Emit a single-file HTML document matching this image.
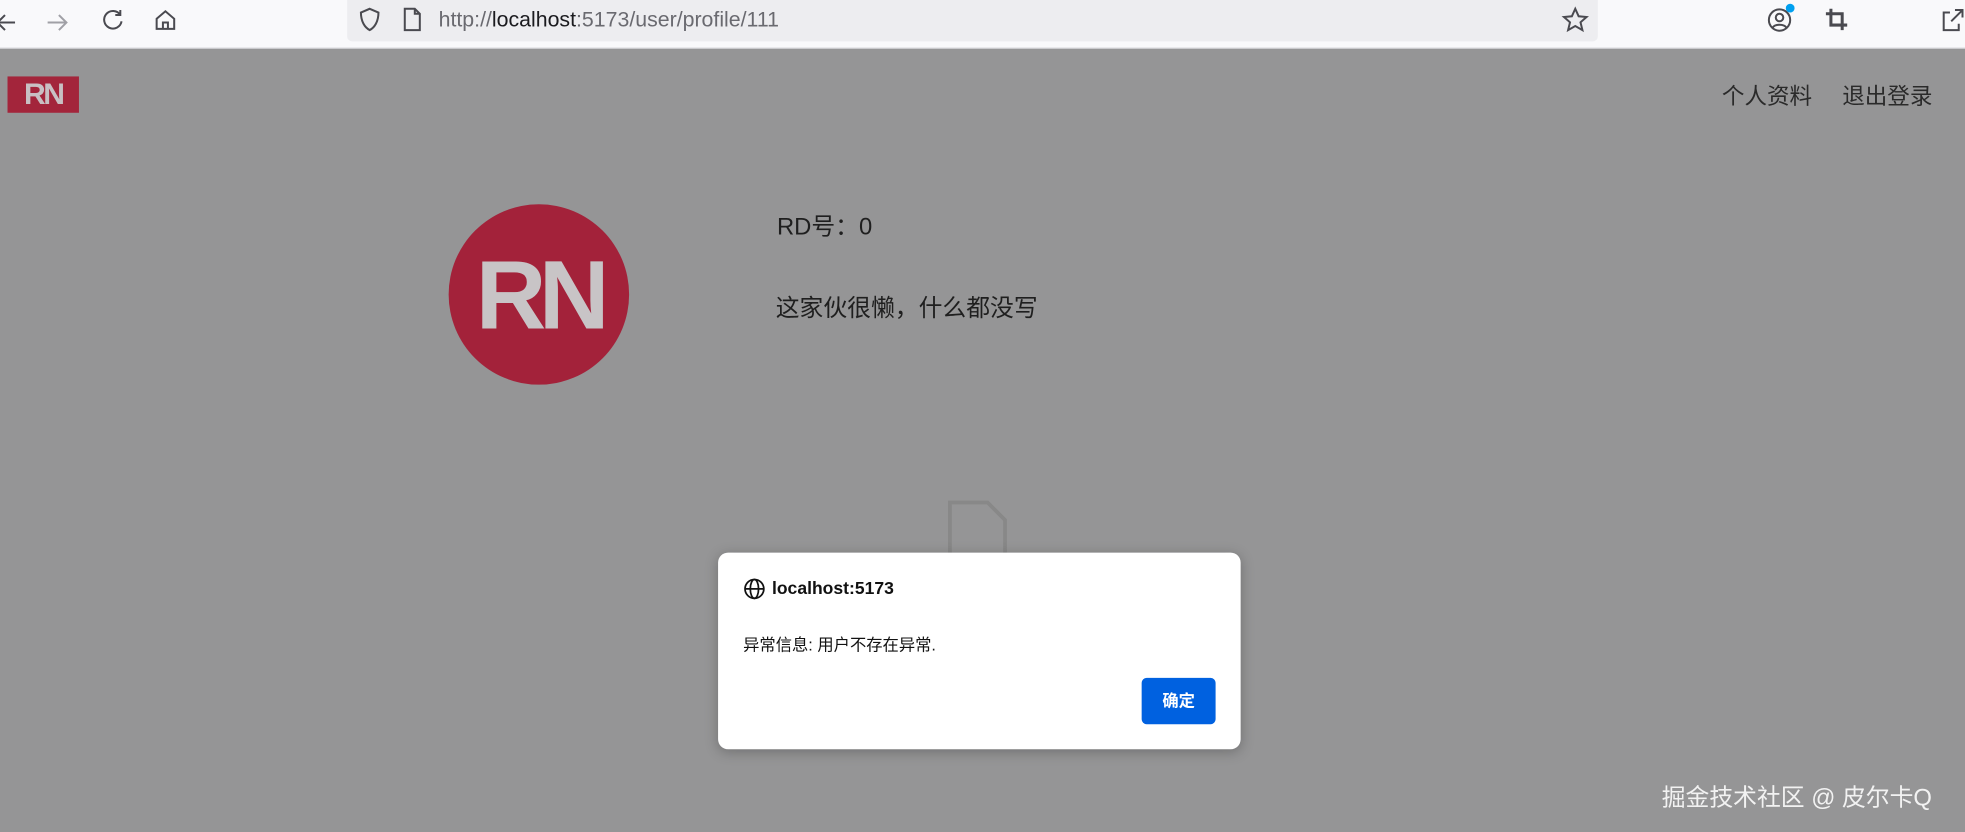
<!DOCTYPE html>
<html><head><meta charset="utf-8"><style>
html,body{margin:0;padding:0;width:1965px;height:832px;overflow:hidden;background:#959596}
#w{position:absolute;left:0;top:0;width:1568px;height:664px;transform:scale(1.25319,1.25301);transform-origin:0 0;font-family:"Liberation Sans","Noto Sans CJK SC",sans-serif}
.top{position:absolute;left:0;top:0;width:1568px;height:38px;background:#f9f9fb;border-bottom:1px solid #d0d0d4}
.url{position:absolute;left:277px;top:0;width:998px;height:33px;background:#ededf0;border-radius:0 0 4px 4px}
.urltxt{position:absolute;left:350px;top:6px;font-size:17px;color:#6a6a70}
.urltxt b{font-weight:normal;color:#1b1b1f}
.ic{position:absolute;stroke:#4a4a50;fill:none;stroke-width:1.6}
.page{position:absolute;left:0;top:39px;width:1568px;height:625px;background:#959596}
.logo{position:absolute;left:6px;top:22px;width:57px;height:29px;background:#a3253b;color:#c8c0c3;font-weight:bold;font-size:24px;line-height:29px;text-align:center;letter-spacing:-2px}
.nav{position:absolute;top:24px;font-size:18px;color:#2a2a2a}
.av{position:absolute;left:358px;top:124px;width:144px;height:144px;border-radius:50%;background:#a3223a;color:#c8c4c6;font-weight:bold;font-size:78px;line-height:144px;text-align:center;letter-spacing:-6px}
.t{position:absolute;font-size:19px;color:#1f1f1f}
.dlg{position:absolute;left:573px;top:441px;width:417px;height:157px;background:#fff;border-radius:8px;box-shadow:0 2px 10px rgba(0,0,0,.25)}
.btn{position:absolute;left:338px;top:100px;width:59px;height:37px;background:#0061e0;border-radius:4px;color:#fff;font-weight:bold;font-size:13px;line-height:37px;text-align:center}
</style></head><body><div id="w">
<div class="top">
<svg class="ic" style="left:-4px;top:8px" width="20" height="20"><path d="M16 10H2M8 4L2 10l6 6"/></svg>
<svg class="ic" style="left:36px;top:8px;stroke:#a0a0a6" width="20" height="20"><path d="M2 10h15M11 4l6 6-6 6"/></svg>
<svg class="ic" style="left:80px;top:6px" width="20" height="20"><path d="M16 6A7 7 0 1 0 17 11M16 2v4h-4"/></svg>
<svg class="ic" style="left:122px;top:6px" width="20" height="20"><path d="M3 9l7-6 7 6v8H3zM8 17v-5h4v5"/></svg>
<div class="url"></div>
<svg class="ic" style="left:285px;top:5px" width="20" height="22"><path d="M10 2l7 3c0 7-3 12-7 14C6 17 3 12 3 5z"/></svg>
<svg class="ic" style="left:320px;top:5px" width="18" height="22"><path d="M3 2h8l4 4v13H3zM11 2v4h4"/></svg>
<div class="urltxt">http://<b>localhost</b>:5173/user/profile/111</div>
<svg class="ic" style="left:1246px;top:5px" width="22" height="22"><path d="M11 2l2.7 6 6.3.6-4.8 4.2 1.5 6.2L11 15.8 5.3 19l1.5-6.2L2 8.6 8.3 8z"/></svg>
<svg class="ic" style="left:1409px;top:5px" width="22" height="22"><circle cx="11" cy="11" r="8.5"/><circle cx="11" cy="9" r="3"/><path d="M5.5 17c2-3 9-3 11 0"/></svg>
<div style="position:absolute;left:1425px;top:3px;width:7px;height:7px;border-radius:50%;background:#00a0f0"></div>
<svg class="ic" style="left:1455px;top:5px;stroke-width:2.4" width="22" height="22"><path d="M6 2v13h13M2 6h13v13"/></svg>
<svg class="ic" style="left:1548px;top:5px" width="22" height="22"><path d="M8 5H3v14h12v-5M9 12L18 3M12 3h6v6"/></svg>
</div>
<div class="page">
<div class="logo">RN</div>
<div class="nav" style="left:1374px">个人资料</div>
<div class="nav" style="left:1470px">退出登录</div>
<div class="av">RN</div>
<div class="t" style="left:620px;top:127px">RD号：0</div>
<div class="t" style="left:619px;top:192px">这家伙很懒，什么都没写</div>
<svg style="position:absolute;left:755px;top:360px" width="52" height="50"><path d="M3 2h30l14 14v34H3z" fill="none" stroke="#888" stroke-width="3"/></svg>
<div class="t" style="left:1326px;top:583px;color:#f2f2f2;font-size:19px">掘金技术社区 @ 皮尔卡Q</div>
</div>
<div class="dlg">
<svg style="position:absolute;left:20px;top:20px" width="18" height="18" fill="none" stroke="#111" stroke-width="1.4"><circle cx="9" cy="9" r="7.5"/><ellipse cx="9" cy="9" rx="3.3" ry="7.5"/><path d="M1.5 9h15"/></svg>
<div style="position:absolute;left:43px;top:20px;font-weight:bold;font-size:14px;color:#111">localhost:5173</div>
<div style="position:absolute;left:20px;top:63px;font-size:13px;color:#111">异常信息: 用户不存在异常.</div>
<div class="btn">确定</div>
</div>
</div></body></html>
